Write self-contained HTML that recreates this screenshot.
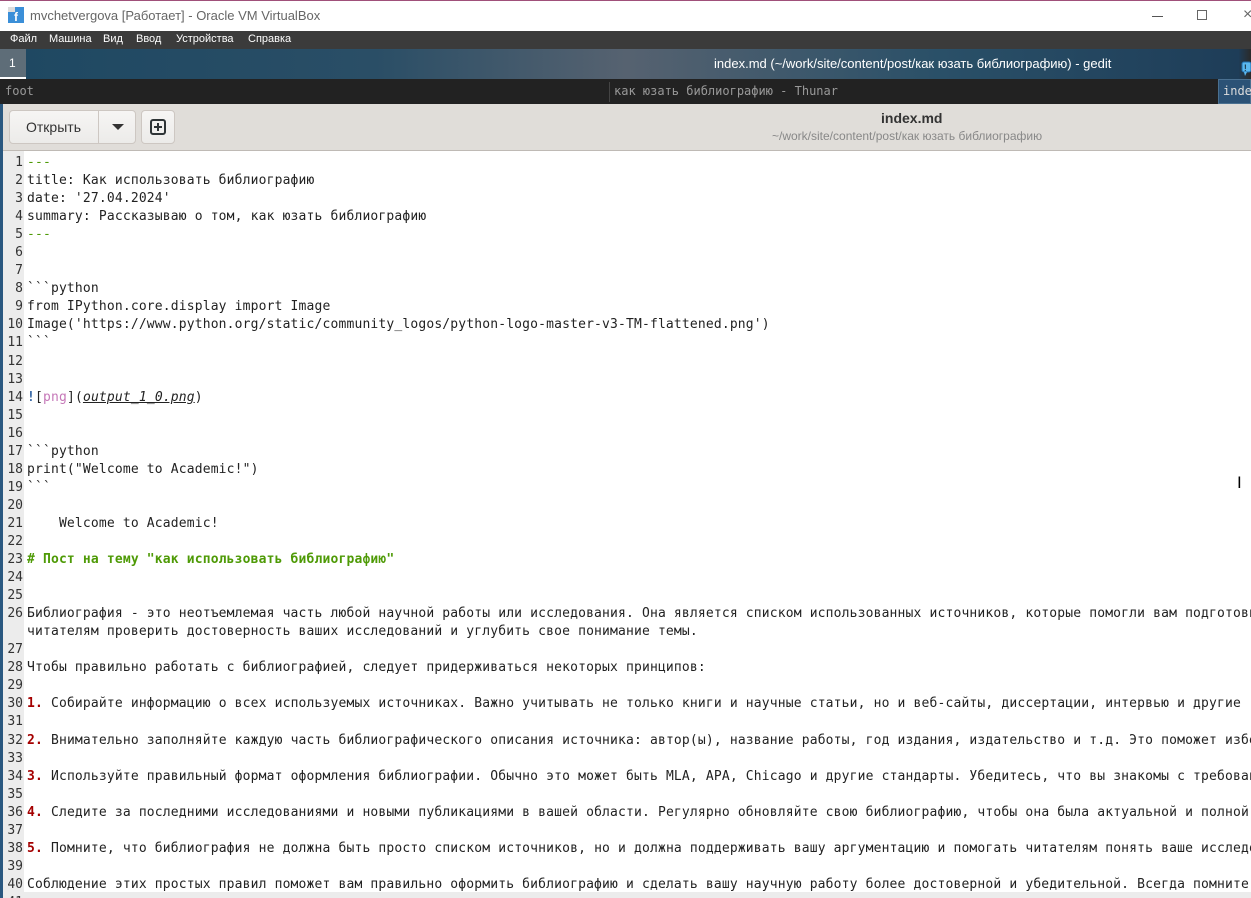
<!DOCTYPE html>
<html><head><meta charset="utf-8"><style>
*{margin:0;padding:0;box-sizing:border-box}
body{width:1251px;height:898px;overflow:hidden;background:#fff;font-family:"Liberation Sans","DejaVu Sans",sans-serif;position:relative}
.tb{position:absolute;left:0;top:0;width:1251px;height:31px;background:#fff;border-top:1px solid #a0507a}
.tb .t{position:absolute;left:30px;top:7px;font-size:13px;color:#666}
.mb{position:absolute;left:0;top:31px;width:1251px;height:18px;background:#3b3b3b;color:#fff;font-size:11px}
.mb span{position:absolute;top:2px}
.wb{position:absolute;left:0;top:49px;width:1251px;height:30px;background:linear-gradient(90deg,#1e4862 0%,#2a4e66 30%,#566270 50%,#2a5068 75%,#1e3d58 99%,#2a2a2a 100%)}
.ws{position:absolute;left:0;top:49px;width:26px;height:30px;background:#5e6d78;color:#fff;font-size:12px;padding:7px 0 0 9px;border-bottom:2px solid #fff}
.wt{position:absolute;left:714px;top:56px;font-size:13px;color:#fff}
.fb{position:absolute;left:0;top:79px;width:1251px;height:25px;background:#222;font-family:"DejaVu Sans Mono",monospace;font-size:12px;color:#999}
.fb span{position:absolute;top:5px}
.hb{position:absolute;left:3px;top:104px;width:1248px;height:47px;background:#e0ddd9;border-bottom:1px solid #bfbab5}
.btn{position:absolute;top:6px;height:34px;background:linear-gradient(#f6f5f4,#ecebe9);border:1px solid #cdc7c2;border-radius:4px}
.ed{position:absolute;left:3px;top:151px;width:1248px;height:747px;background:#fff;font-family:"DejaVu Sans Mono",monospace;font-size:13px;line-height:18.05px;white-space:pre;overflow:hidden}
.gut{position:absolute;left:0;top:0;width:21px;height:747px;background:#ececec}
.ln{position:absolute;left:0;top:0;width:20px;text-align:right;color:#333;padding-top:3px}
.tx{position:absolute;left:24px;top:0;color:#222;padding-top:3px;letter-spacing:0.16px}
.g{color:#4e9a06}.r{color:#a40000;font-weight:bold}.p{color:#c678b8}
.cur{position:absolute;left:21px;top:741px;width:1227px;height:18px;background:#ececec}
.left{position:absolute;left:0;top:104px;width:3px;height:794px;background:#2a5880}
</style></head><body>
<div class="tb">
<svg style="position:absolute;left:8px;top:6px" width="16" height="16"><rect width="16" height="16" fill="#3b8fd8"/><rect x="0" y="0" width="7" height="5" fill="#ddd"/><text x="6" y="14" font-size="12" font-weight="bold" fill="#fff" font-family="Liberation Sans">f</text></svg>
<div class="t">mvchetvergova [Работает] - Oracle VM VirtualBox</div>
<div style="position:absolute;left:1152px;top:15px;width:11px;height:1px;background:#555"></div>
<div style="position:absolute;left:1197px;top:9px;width:10px;height:10px;border:1px solid #666"></div>
<div style="position:absolute;left:1243px;top:5px;font-size:16px;color:#666">×</div>
</div>
<div class="mb"><span style="left:10px">Файл</span><span style="left:49px">Машина</span><span style="left:103px">Вид</span><span style="left:136px">Ввод</span><span style="left:176px">Устройства</span><span style="left:248px">Справка</span></div>
<div class="wb"></div><div class="ws">1</div>
<div class="wt">index.md (~/work/site/content/post/как юзать библиографию) - gedit</div>
<svg style="position:absolute;left:1241px;top:61px" width="10" height="16"><rect x="1" y="1" width="9" height="10" rx="2" fill="#5bb8f0" stroke="#1f6fb0"/><path d="M3 11 L4 15 L6 11" fill="#5bb8f0"/><text x="3" y="10" font-size="9" fill="#000">!</text></svg>
<div class="fb"><span style="left:5px">foot</span><div style="position:absolute;left:609px;top:3px;width:1px;height:20px;background:#444"></div><span style="left:614px">как юзать библиографию - Thunar</span>
<div style="position:absolute;left:1218px;top:0;width:33px;height:25px;background:#2b5276;border:1px solid #4a7090;color:#ddd;padding:4px 0 0 4px">inde</div></div>
<div class="left"></div>
<div class="hb">
<div class="btn" style="left:6px;width:127px"><div style="position:absolute;left:88px;top:0;width:1px;height:32px;background:#cdc7c2"></div><span style="position:absolute;left:16px;top:8px;font-size:14px;color:#333">Открыть</span><svg style="position:absolute;left:102px;top:13px" width="12" height="7"><path d="M0 0H12L6 6Z" fill="#333"/></svg></div>
<div class="btn" style="left:138px;width:34px"><svg style="position:absolute;left:8px;top:8px" width="16" height="16"><rect x="1" y="1" width="14" height="14" rx="2" fill="none" stroke="#2e3436" stroke-width="2"/><path d="M8 4V12M4 8H12" stroke="#2e3436" stroke-width="2"/></svg></div>
<div style="position:absolute;left:878px;top:6px;font-size:14px;font-weight:bold;color:#333">index.md</div>
<div style="position:absolute;left:769px;top:25px;font-size:12px;color:#888">~/work/site/content/post/как юзать библиографию</div>
</div>
<div class="ed">
<div class="gut"></div><div class="cur"></div>
<div class="ln">1
2
3
4
5
6
7
8
9
10
11
12
13
14
15
16
17
18
19
20
21
22
23
24
25
26

27
28
29
30
31
32
33
34
35
36
37
38
39
40
41</div>
<div class="tx"><span class="g">---</span>
title: Как использовать библиографию
date: '27.04.2024'
summary: Рассказываю о том, как юзать библиографию
<span class="g">---</span>


&#96;&#96;&#96;python
from IPython.core.display import Image
Image('https://www.python.org/static/community_logos/python-logo-master-v3-TM-flattened.png')
&#96;&#96;&#96;


<span style="color:#3465a4;font-weight:bold">!</span>[<span class="p">png</span>](<i style="text-decoration:underline">output_1_0.png</i>)


&#96;&#96;&#96;python
print("Welcome to Academic!")
&#96;&#96;&#96;

    Welcome to Academic!

<b class="g"># Пост на тему "как использовать библиографию"</b>


Библиография - это неотъемлемая часть любой научной работы или исследования. Она является списком использованных источников, которые помогли вам подготовить
читателям проверить достоверность ваших исследований и углубить свое понимание темы.

Чтобы правильно работать с библиографией, следует придерживаться некоторых принципов:

<span class="r">1.</span> Собирайте информацию о всех используемых источниках. Важно учитывать не только книги и научные статьи, но и веб-сайты, диссертации, интервью и другие

<span class="r">2.</span> Внимательно заполняйте каждую часть библиографического описания источника: автор(ы), название работы, год издания, издательство и т.д. Это поможет избежать

<span class="r">3.</span> Используйте правильный формат оформления библиографии. Обычно это может быть MLA, APA, Chicago и другие стандарты. Убедитесь, что вы знакомы с требованиями

<span class="r">4.</span> Следите за последними исследованиями и новыми публикациями в вашей области. Регулярно обновляйте свою библиографию, чтобы она была актуальной и полной

<span class="r">5.</span> Помните, что библиография не должна быть просто списком источников, но и должна поддерживать вашу аргументацию и помогать читателям понять ваше исследование

Соблюдение этих простых правил поможет вам правильно оформить библиографию и сделать вашу научную работу более достоверной и убедительной. Всегда помните
</div>
<div style="position:absolute;left:1234px;top:323px;font-size:16px;color:#000;font-family:'DejaVu Sans'">I</div>
</div>
</body></html>
